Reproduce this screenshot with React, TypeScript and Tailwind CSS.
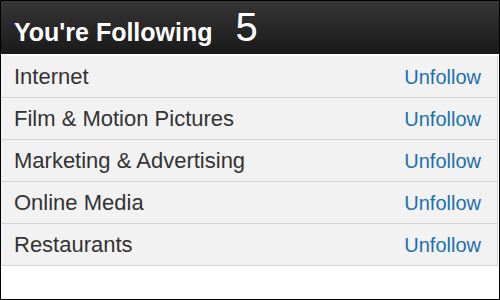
import React from "react";

const items = [
  "Internet",
  "Film & Motion Pictures",
  "Marketing & Advertising",
  "Online Media",
  "Restaurants",
];

export default function App() {
  return (
    <div
      className="w-[500px] h-[300px] border border-black bg-white flex flex-col"
      style={{ fontFamily: '"Liberation Sans", Arial, sans-serif' }}
    >
      <div className="h-[53px] flex items-baseline pl-[13px] pt-[6px] bg-gradient-to-b from-[#363636] to-[#1a1a1a] text-white">
        <span className="text-[25px] font-bold leading-none">You're Following</span>
        <span className="text-[40px] leading-none ml-[23px]">{items.length}</span>
      </div>
      <div className="mt-[2px] mr-[1px] flex flex-col">
        {items.map((name) => (
          <div
            key={name}
            className="h-[42px] flex items-center justify-between pl-[13px] pr-[16px] bg-[#f2f2f2] border-b border-r border-[#d4d4d4]"
          >
            <span className="text-[22px] text-[#333333]">{name}</span>
            <span className="text-[20px] text-[#1b70ae]">Unfollow</span>
          </div>
        ))}
      </div>
    </div>
  );
}
